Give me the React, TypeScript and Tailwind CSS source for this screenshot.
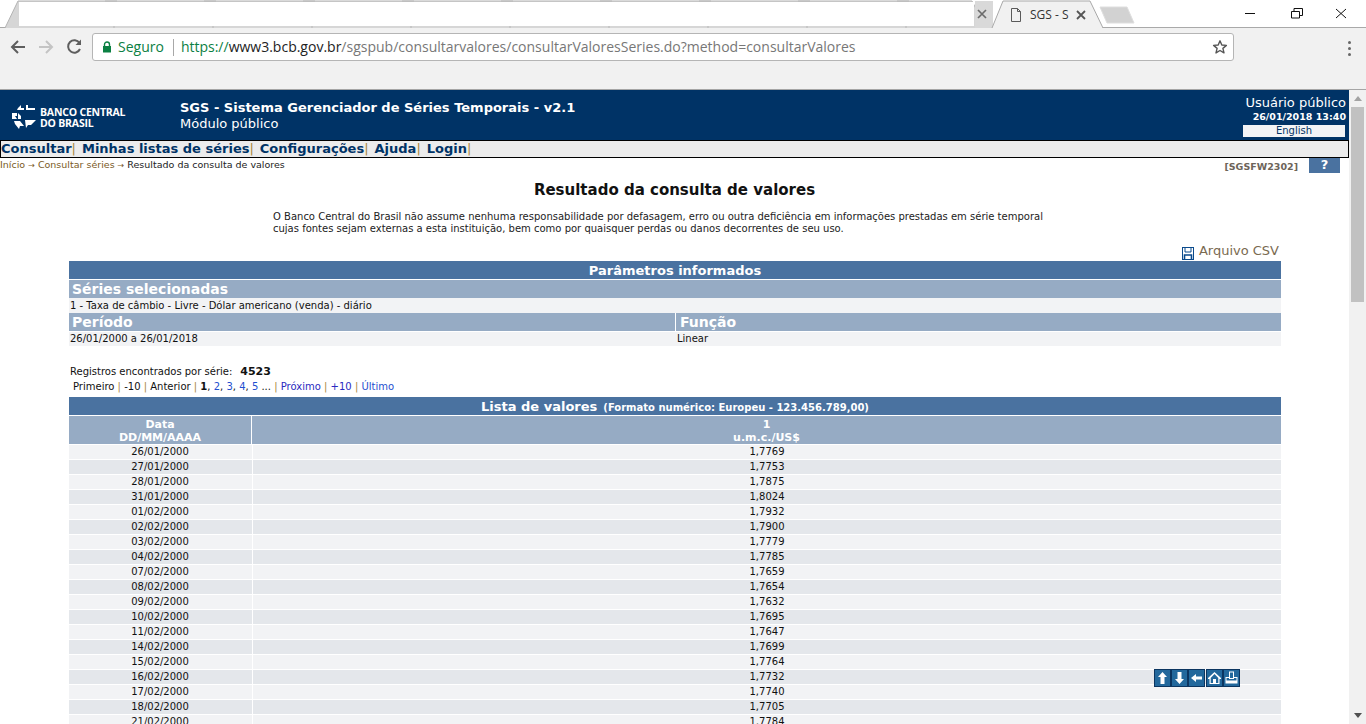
import React from "react";

const rows: [string, string][] = [
  ["26/01/2000", "1,7769"], ["27/01/2000", "1,7753"], ["28/01/2000", "1,7875"], ["31/01/2000", "1,8024"],
  ["01/02/2000", "1,7932"], ["02/02/2000", "1,7900"], ["03/02/2000", "1,7779"], ["04/02/2000", "1,7785"],
  ["07/02/2000", "1,7659"], ["08/02/2000", "1,7654"], ["09/02/2000", "1,7632"], ["10/02/2000", "1,7695"],
  ["11/02/2000", "1,7647"], ["14/02/2000", "1,7699"], ["15/02/2000", "1,7764"], ["16/02/2000", "1,7732"],
  ["17/02/2000", "1,7740"], ["18/02/2000", "1,7705"], ["21/02/2000", "1,7784"],
];

function Sep() {
  return <span className="font-normal text-[#a8853c]">|</span>;
}

function FloatBtn({ children, ml }: { children: React.ReactNode; ml?: boolean }) {
  return (
    <div className={`w-[17px] h-[18px] bg-[#22689c] border border-[#0b3560] flex items-center justify-center ${ml ? "ml-px" : ""}`}>
      <svg width="13" height="14" viewBox="0 0 13 14" fill="#fff">{children}</svg>
    </div>
  );
}

export default function App() {
  return (
    <div className="h-[724px] w-[1366px] overflow-hidden flex flex-col bg-white font-['DejaVu_Sans',sans-serif] text-[10px] text-[#111]">
      {/* Tab strip */}
      <div className="h-[28px] shrink-0 bg-white border-b border-[#a9a9a9] flex relative">
        <svg className="absolute left-0 top-0" width="1366" height="29" fill="none">
          <path d="M5 28 L18 1 H972 L986 28" stroke="#b4b4b4" fill="#d6d6d6" />
          <rect x="19" y="2" width="955" height="24" fill="#fff" />
          {[115, 214, 313, 412, 511, 610, 709, 808, 907].map((x) => (
            <g key={x} stroke="#b8b8b8">
              <path d={`M${x + 2} 1 H${x - 10}`} />
              <path d={`M${x - 1} 26 V28`} />
            </g>
          ))}
          <rect x="975" y="1" width="18" height="27" fill="#d9d9d9" />
          <path d="M978 10 l8 8 M986 10 l-8 8" stroke="#6b6b6b" strokeWidth="1.7" />
          <path d="M992 28 L1003 1 H1090 L1103 28 H992" fill="#f1f1f1" />
          <path d="M992 28 L1003 1 H1090 L1103 28" stroke="#a9a9a9" />
          <path d="M1011.5 8.5 H1017.5 L1020.5 11.5 V21.5 H1011.5 Z M1017.5 8.5 V11.5 H1020.5" stroke="#5a5a5a" />
          <path d="M1077 11 l8 8 M1085 11 l-8 8" stroke="#555" strokeWidth="1.8" />
          <path d="M1100 7 H1127 L1134 23 H1107 Z" fill="#d2d2d2" stroke="#dedede" strokeLinejoin="round" />
          <path d="M1245 13.5 H1255" stroke="#111" />
          <path d="M1291.5 11.5 H1299.5 V18 H1291.5 Z M1294 11 V8.5 H1302.5 V15.5 H1300" stroke="#111" />
          <path d="M1336 9 L1346 18 M1346 9 L1336 18" stroke="#111" />
        </svg>
        <span className="absolute left-[1030px] top-[5px] w-[50px] overflow-hidden whitespace-nowrap font-['Open_Sans',sans-serif] text-[12px] text-[#333] leading-[20px]">SGS - S</span>
      </div>
      {/* Toolbar */}
      <div className="h-[62px] shrink-0 bg-[#f1f1f1] border-b border-[#a5a5a5] pt-[5px] flex items-start">
        <div className="w-[92px] h-[28px] flex items-center shrink-0">
          <svg width="92" height="28" fill="none" strokeWidth="2">
            <path d="M25 14 H12 M18 8 L12 14 L18 20" stroke="#5e5e5e" />
            <path d="M39 14 H52 M46 8 L52 14 L46 20" stroke="#c4c4c4" />
            <path d="M79.5 10 A6.2 6.2 0 1 0 80 16" stroke="#5e5e5e" />
            <path d="M81 6.5 V12 H75.5 Z" fill="#5e5e5e" />
          </svg>
        </div>
        <div className="w-[1142px] h-[28px] bg-white border border-[#b5b5b5] rounded-[3px] flex items-center font-['Open_Sans',sans-serif] text-[14px] leading-[26px] whitespace-nowrap">
          <svg className="ml-[9px] shrink-0" width="10" height="12" viewBox="0 0 10 12">
            <path d="M2.5 5 V3.5 a2.5 2.5 0 0 1 5 0 V5" fill="none" stroke="#0b8043" strokeWidth="1.4" />
            <rect x="1" y="5" width="8" height="6.5" fill="#0b8043" />
          </svg>
          <span className="ml-[6px] text-[#0b8043]">Seguro</span>
          <span className="ml-[9px] h-[17px] w-px bg-[#a8a8a8]" />
          <span className="ml-[7px] text-[#0b8043]">https://</span>
          <span className="text-[#222]">www3.bcb.gov.br</span>
          <span className="text-[#777]">/sgspub/consultarvalores/consultarValoresSeries.do?method=consultarValores</span>
          <svg className="ml-auto mr-[5px] shrink-0" width="16" height="16" viewBox="0 0 16 16">
            <path d="M8 1.8 L9.8 6 L14.4 6.4 L10.9 9.4 L12 13.9 L8 11.5 L4 13.9 L5.1 9.4 L1.6 6.4 L6.2 6 Z" fill="none" stroke="#555" strokeWidth="1.4" strokeLinejoin="round" />
          </svg>
        </div>
        <div className="flex-1 flex justify-end pr-[15px] pt-[8px]">
          <div className="flex flex-col gap-[3px]">
            <span className="w-[3px] h-[3px] rounded-full bg-[#666]" />
            <span className="w-[3px] h-[3px] rounded-full bg-[#666]" />
            <span className="w-[3px] h-[3px] rounded-full bg-[#666]" />
          </div>
        </div>
      </div>
      {/* Viewport */}
      <div className="flex-1 min-h-0 flex">
        <div className="w-[1349px] shrink-0 overflow-hidden">
          {/* Blue header */}
          <div className="h-[50px] bg-[#003366] flex text-white">
            <div className="w-[180px] shrink-0 pl-[11px] pt-[14px] flex items-start">
              <svg width="27" height="26" viewBox="0 0 27 26" fill="#fff">
                <path d="M7 4 L10 1 V4 H13 V6 H6 Z M15 1 H17 V4 H24 V6 H15 Z" />
                <path d="M1 9 H6 V12 H4 L6 15 H1 Z M7 9 L10 12 V15 H7 Z" />
                <path d="M3 17 H9 L13 22 L9 22 L8 25 L4 20 Z M14 16 H25 L20 21 H17 L15 24 Z" />
              </svg>
              <div className="ml-[2px] mt-[3px] font-['Open_Sans',sans-serif] font-bold text-[10.5px] leading-[10.5px] tracking-[-0.2px] whitespace-nowrap">
                <div>BANCO CENTRAL</div>
                <div>DO BRASIL</div>
              </div>
            </div>
            <div className="flex-1 pt-[9px]">
              <div className="font-bold text-[13px] leading-[17px]">SGS - Sistema Gerenciador de Séries Temporais - v2.1</div>
              <div className="text-[13px] leading-[15px]">Módulo público</div>
            </div>
            <div className="w-[106px] shrink-0 pt-[4px] text-right">
              <div className="text-[13px] leading-[17px] pr-[3px]">Usuário público</div>
              <div className="font-bold text-[9.5px] leading-[11px] pr-[3px] whitespace-nowrap">26/01/2018 13:40</div>
              <div className="mt-[3px] h-[12px] w-[102px] bg-[#f2f3f5] text-center text-[#003366] leading-[12px] text-[10px]">English</div>
            </div>
          </div>
          {/* Menu */}
          <div className="h-[18px] bg-[#ececec] border border-black flex items-center whitespace-nowrap font-bold text-[13px] leading-[16px] text-[#003366]">
            <span>Consultar</span><Sep />
            <span className="ml-[6px]">Minhas listas de séries</span><Sep />
            <span className="ml-[6px]">Configurações</span><Sep />
            <span className="ml-[6px]">Ajuda</span><Sep />
            <span className="ml-[6px]">Login</span><Sep />
          </div>
          {/* Breadcrumb */}
          <div className="h-[13px] flex items-start relative">
            <div className="text-[9.5px] leading-[13px] whitespace-nowrap text-[#7a5a1e]">
              Início <span className="text-[8px]">→</span> Consultar séries <span className="text-[8px]">→</span> <span className="text-[#222]">Resultado da consulta de valores</span>
            </div>
            <div className="ml-auto mr-[9px] flex items-start">
              <span className="mt-[3px] font-bold text-[9.5px] leading-[12px] text-[#6d6459]">[SGSFW2302]</span>
              <span className="ml-[11px] w-[31px] h-[15px] bg-[#4a72a0] text-white text-center font-bold text-[13px] leading-[14px]">?</span>
            </div>
          </div>
          {/* Title */}
          <div className="mt-[9px] text-center font-bold text-[15px] leading-[20px] text-[#111]">Resultado da consulta de valores</div>
          <div className="mt-[11px] ml-[273px] text-[10px] leading-[12px] whitespace-nowrap text-[#222]">
            <div>O Banco Central do Brasil não assume nenhuma responsabilidade por defasagem, erro ou outra deficiência em informações prestadas em série temporal</div>
            <div>cujas fontes sejam externas a esta instituição, bem como por quaisquer perdas ou danos decorrentes de seu uso.</div>
          </div>
          {/* CSV */}
          <div className="ml-[69px] w-[1212px] mt-[4px] h-[21px] flex justify-end items-end pb-[1px]">
            <svg className="mb-[-1px]" width="12" height="13" viewBox="0 0 12 13" fill="none" stroke="#0a4a8c">
              <rect x="0.5" y="0.5" width="11" height="12" fill="#fff" />
              <path d="M3 1 V5 H9 V1" />
              <path d="M2.5 12 V8 H9.5 V12" strokeWidth="1.6" />
            </svg>
            <span className="ml-[5px] text-[13px] leading-[17px] text-[#7a6a50] mr-[2px]">Arquivo CSV</span>
          </div>
          {/* Params */}
          <div className="ml-[69px] w-[1212px] mt-[1px]">
            <div className="h-[18px] bg-[#4a72a0] text-center text-white font-bold text-[13px] leading-[19px]">Parâmetros informados</div>
            <div className="mt-px h-[18px] bg-[#96abc4] pl-[3px] text-white font-bold text-[14px] leading-[18px]">Séries selecionadas</div>
            <div className="h-[15px] bg-[#f2f3f5] pl-px text-[10px] leading-[15px]">1 - Taxa de câmbio - Livre - Dólar americano (venda) - diário</div>
            <div className="flex gap-px">
              <div className="w-[606px] h-[18px] bg-[#96abc4] pl-[3px] text-white font-bold text-[14px] leading-[18px]">Período</div>
              <div className="flex-1 h-[18px] bg-[#96abc4] pl-[4px] text-white font-bold text-[14px] leading-[18px]">Função</div>
            </div>
            <div className="mt-px flex gap-px h-[14px] bg-[#f2f3f5] text-[10px] leading-[14px]">
              <div className="w-[606px] pl-px">26/01/2000 a 26/01/2018</div>
              <div className="flex-1 pl-px">Linear</div>
            </div>
          </div>
          {/* Records */}
          <div className="ml-[70px] mt-[18px] h-[15px] leading-[15px] whitespace-nowrap">
            Registros encontrados por série:<span className="ml-[8px] font-bold text-[11px]">4523</span>
          </div>
          <div className="ml-[73px] h-[15px] leading-[15px] whitespace-nowrap">
            Primeiro <Sep /> -10 <Sep /> Anterior <Sep /> <b>1</b>, <span className="text-[#1f4fd0]">2</span>, <span className="text-[#1f4fd0]">3</span>, <span className="text-[#1f4fd0]">4</span>, <span className="text-[#1f4fd0]">5</span> ... <Sep /> <span className="text-[#2a2ac0]">Próximo</span> <Sep /> <span className="text-[#2a2ac0]">+10</span> <Sep /> <span className="text-[#1f4fd0]">Último</span>
          </div>
          {/* Values */}
          <div className="ml-[69px] w-[1212px] mt-[3px]">
            <div className="h-[18px] bg-[#4a72a0] text-center text-white font-bold leading-[19px] whitespace-nowrap">
              <span className="text-[13px]">Lista de valores</span><span className="ml-[6px] text-[10px]">(Formato numérico: Europeu - 123.456.789,00)</span>
            </div>
            <div className="mt-px flex gap-px h-[28px] text-white font-bold text-center text-[11px] leading-[13px] pt-0">
              <div className="w-[182px] bg-[#96abc4] pt-[2px]">Data<br />DD/MM/AAAA</div>
              <div className="flex-1 bg-[#96abc4] pt-[2px]">1<br />u.m.c./US$</div>
            </div>
            {rows.map(([d, v], i) => (
              <div key={d} className={`mt-px flex gap-px h-[14px] text-center text-[10px] leading-[14px] ${i % 2 ? "bg-[#e4e7eb]" : "bg-[#f2f3f5]"}`}>
                <div className="w-[182px] shrink-0">{d}</div>
                <div className="flex-1 border-l border-white">{v}</div>
              </div>
            ))}
          </div>
        </div>
        {/* Scrollbar */}
        <div className="w-[17px] shrink-0 bg-[#f1f1f1] flex flex-col items-center relative">
          <div className="h-[17px] flex items-center justify-center">
            <svg width="8" height="5"><path d="M0 5 L4 0 L8 5 Z" fill="#a3a3a3" /></svg>
          </div>
          <div className="w-[13px] h-[195px] bg-[#c1c1c1]" />
          <div className="mt-auto h-[17px] flex items-center justify-center">
            <svg width="8" height="5"><path d="M0 0 L8 0 L4 5 Z" fill="#505050" /></svg>
          </div>
        </div>
      </div>
      {/* Floating tools */}
      <div className="fixed left-[1154px] top-[669px] flex">
        <FloatBtn><path d="M6.5 1 L11 6 H8.5 V13 H4.5 V6 H2 Z" /></FloatBtn>
        <FloatBtn><path d="M4.5 1 H8.5 V8 H11 L6.5 13 L2 8 H4.5 Z" /></FloatBtn>
        <FloatBtn><path d="M1 7 L6 3 V5.5 H12 V8.5 H6 V11 Z" /></FloatBtn>
        <FloatBtn ml><path fillRule="evenodd" d="M6.5 1 L13 7 V8 H11.5 V13 H1.5 V8 H0 V7 Z M2.7 12 H5 V8 H8 V12 H10.3 V7 L6.5 3 L2.7 7 Z" /></FloatBtn>
        <FloatBtn><path fillRule="evenodd" d="M4 0.5 H9 V6 H12.5 V12.5 H0.5 V6 H4 Z M5 1.5 V7 H8 V1.5 Z M1.5 7 V9.5 H11.5 V7 H9 V8 H4 V7 Z" /></FloatBtn>
      </div>
    </div>
  );
}
